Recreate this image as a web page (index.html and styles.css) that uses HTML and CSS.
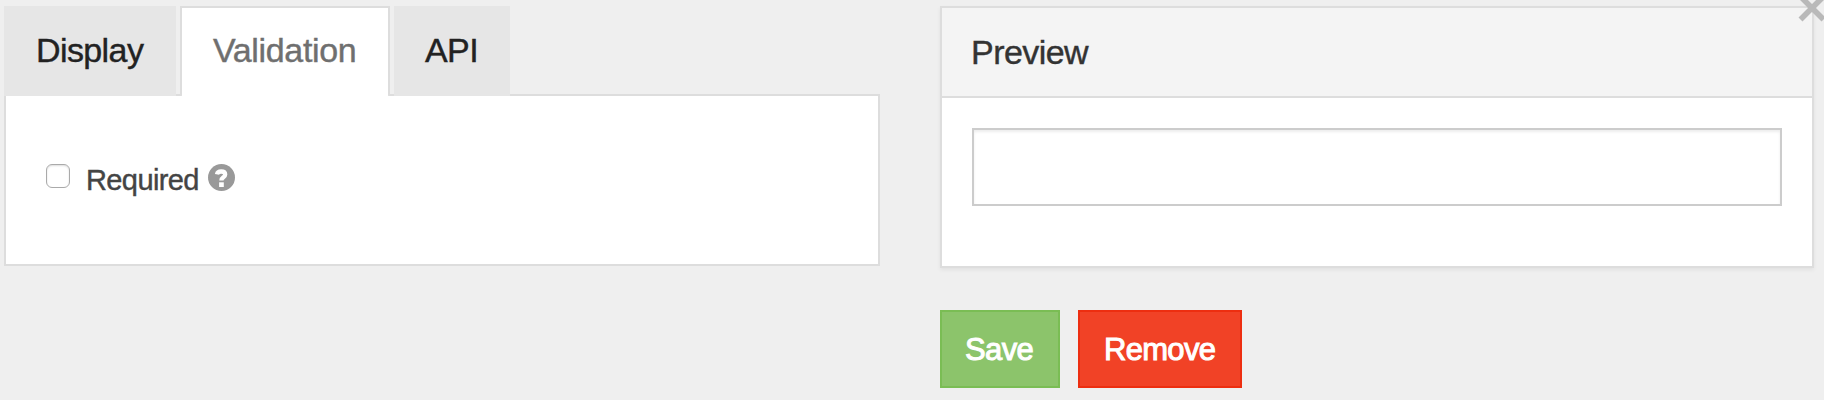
FILE: index.html
```html
<!DOCTYPE html>
<html lang="en">
<head>
<meta charset="utf-8">
<title>Field settings</title>
<link rel="stylesheet" href="styles.css">
</head>
<body>
<main class="editor">
  <section class="settings">
    <nav class="tabs">
      <a class="tab tab-display"><span>Display</span></a>
      <a class="tab tab-validation active"><span>Validation</span></a>
      <a class="tab tab-api"><span>API</span></a>
    </nav>
    <div class="tab-content">
      <label class="check">
        <span class="checkbox"></span>
        <span class="check-text">Required</span>
        <svg class="help" viewBox="0 0 27 27"><circle cx="13.5" cy="13.5" r="13.5" fill="#999"/><path d="M9 10.4C9.4 8.2 11 7.5 13.2 7.5c2.4 0 4 1.1 4 3 0 2.9-3.8 2.7-3.8 5.9" fill="none" stroke="#fff" stroke-width="4.3"/><rect x="11.1" y="18.3" width="4.7" height="4.7" fill="#fff"/></svg>
      </label>
    </div>
  </section>
  <section class="side">
    <div class="panel">
      <div class="panel-heading"><span>Preview</span></div>
      <div class="panel-body"><div class="field"></div></div>
      <svg class="close" viewBox="0 0 28 28"><path d="M2.5 2.5l23 23M25.5 2.5l-23 23" stroke="#b9b9b9" stroke-width="5.6" fill="none"/></svg>
    </div>
    <div class="actions">
      <div class="btn save"><span>Save</span></div>
      <div class="btn remove"><span>Remove</span></div>
    </div>
  </section>
</main>
</body>
</html>
```
FILE: styles.css
```css
* { box-sizing: border-box; }
body {
  margin: 0;
  background: #efefef;
  font-family: "Liberation Sans", Arial, sans-serif;
  color: #333;
  overflow: hidden;
}
.editor { display: flex; gap: 60px; height: 400px; padding: 6px 10px 0 4px; }
.settings { width: 876px; }
.tabs { display: flex; gap: 4px; height: 90px; font-size: 34px; color: #222; }
.tab { height: 90px; padding: 24px 0 0 31px; line-height: 40px; background: #e6e6e6; position: relative; z-index: 1; white-space: nowrap; -webkit-text-stroke: .4px currentColor; }
.tab-display { width: 172px; padding-left: 32px; letter-spacing: -0.6px; }
.tab-validation { width: 210px; letter-spacing: -0.35px; }
.tab-api { width: 116px; letter-spacing: -0.6px; }
.tab.active { background: #fff; color: #6f6f6f; border: 2px solid #ddd; border-bottom: 0; border-radius: 0 0 2px 2px; padding-top: 22px; }
.tab-content { height: 172px; margin-top: -2px; background: #fff; border: 2px solid #ddd; padding: 68px 0 0 40px; }
.check { display: flex; align-items: flex-start; color: #444; }
.checkbox { width: 24px; height: 24px; border: 1px solid #aaa; border-radius: 6px; background: #fff; box-shadow: inset 0 1px 2px #ddd; }
.check-text { width: 112px; margin: -1px 0 0 16px; font-size: 29px; line-height: 34px; letter-spacing: -0.6px; -webkit-text-stroke: .4px currentColor; }
.help { width: 27px; height: 27px; margin-left: 10px; }
.side { width: 874px; }
.panel { position: relative; height: 262px; border: 2px solid #ddd; background: #fff; box-shadow: 0 2px 4px rgba(0,0,0,.06); }
.panel-heading { height: 90px; background: #f4f4f4; border-bottom: 2px solid #ddd; padding: 24px 0 0 29px; font-size: 34px; line-height: 40px; letter-spacing: -0.55px; -webkit-text-stroke: .4px currentColor; }
.panel-body { padding: 30px; }
.field { height: 78px; border: 2px solid #ccc; box-shadow: inset 0 2px 3px rgba(0,0,0,.075); background: #fff; }
.close { position: absolute; left: 856px; top: -14px; width: 28px; height: 28px; }
.actions { display: flex; gap: 18px; margin-top: 42px; }
.btn { height: 78px; padding: 20px 0 0 23px; color: #fff; font-size: 31px; line-height: 36px; -webkit-text-stroke: 1px #fff; }
.save { width: 120px; background: #8cc46b; border: 2px solid #7abd54; letter-spacing: -0.6px; }
.remove { width: 164px; padding-left: 24px; background: #f14226; border: 2px solid #ed2e10; letter-spacing: -0.7px; }
```
